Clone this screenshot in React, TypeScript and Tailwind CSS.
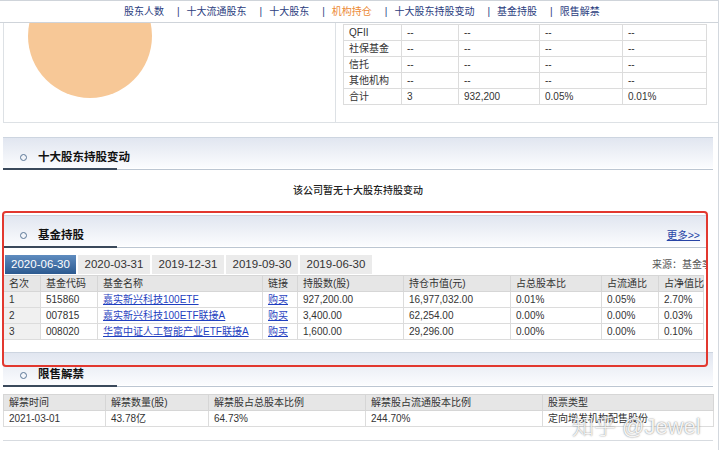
import React from 'react'

const navItems = ['股东人数', '十大流通股东', '十大股东', '机构持仓', '十大股东持股变动', '基金持股', '限售解禁']

const orgRows = [
  ['QFII', '--', '--', '--', '--'],
  ['社保基金', '--', '--', '--', '--'],
  ['信托', '--', '--', '--', '--'],
  ['其他机构', '--', '--', '--', '--'],
  ['合计', '3', '932,200', '0.05%', '0.01%'],
]
const orgCols = [58, 57, 81, 83, 84]

const tabs = ['2020-06-30', '2020-03-31', '2019-12-31', '2019-09-30', '2019-06-30']

const fundHead = ['名次', '基金代码', '基金名称', '链接', '持股数(股)', '持仓市值(元)', '占总股本比', '占流通比', '占净值比']
const fundCols = [37, 57, 165, 35, 106, 107, 91, 57, 45]
const fundRows = [
  ['1', '515860', '嘉实新兴科技100ETF', '购买', '927,200.00', '16,977,032.00', '0.01%', '0.05%', '2.70%'],
  ['2', '007815', '嘉实新兴科技100ETF联接A', '购买', '3,400.00', '62,254.00', '0.00%', '0.00%', '0.03%'],
  ['3', '008020', '华富中证人工智能产业ETF联接A', '购买', '1,600.00', '29,296.00', '0.00%', '0.00%', '0.10%'],
]

const lockHead = ['解禁时间', '解禁数量(股)', '解禁股占总股本比例', '解禁股占流通股本比例', '股票类型']
const lockCols = [102, 103, 157, 177, 171]
const lockRow = ['2021-03-01', '43.78亿', '64.73%', '244.70%', '定向增发机构配售股份']

// section title bar with ring icon + dark underline stub
function SectionTitle({ title, more, tall }: { title: string; more?: boolean; tall?: boolean }) {
  return (
    <div>
      <div
        className={
          (tall ? 'h-[33px] pt-[12px] ' : 'h-[31px] pt-[9px] ') +
          'border-t border-[#cdd5e0] bg-gradient-to-b from-[#e1e6f0] to-[#fbfcfe] flex items-center pl-[17px] pr-[7px]'
        }
      >
        <span className="w-[7px] h-[7px] rounded-full border-[1.5px] border-[#5a7696]" />
        <span className="ml-[11px] text-[11.5px] font-bold text-[#111]">{title}</span>
        {more && <span className="ml-auto text-[10.5px] text-[#2744a6] underline">更多&gt;&gt;</span>}
      </div>
      <div className="flex items-end h-[2px]">
        <div className="w-[114px] h-[2px] bg-[#3a495b]" />
        <div className="flex-1 h-px bg-[#bcc6d2]" />
      </div>
    </div>
  )
}

export default function App() {
  return (
    <div className="relative w-[720px] h-[450px] overflow-hidden bg-white text-[#333] font-['Liberation_Sans','Noto_Sans_CJK_SC',sans-serif]">
      <div className="w-[719px] h-full border-r border-[#d3d8de] flex flex-col">
        {/* NAV */}
        <div className="h-[23px] shrink-0 border-y border-[#cfd4da] flex items-center pl-[124px] text-[10px]">
          {navItems.map((n, i) => (
            <React.Fragment key={n}>
              {i > 0 && <span className="ml-[13px] mr-[7px] text-[#2b3d80]">|</span>}
              <span className={n === '机构持仓' ? 'text-[#ec8a35]' : 'text-[#2b3d80]'}>{n}</span>
            </React.Fragment>
          ))}
        </div>

        {/* 机构持仓 (scrolled) */}
        <div className="h-[100px] shrink-0 flex">
          <div className="ml-[3px] w-[333px] border-x border-b border-[#dde1e5] overflow-hidden">
            <svg width="331" height="99" viewBox="0 0 331 99">
              <circle cx="86" cy="13" r="62" fill="#f7c897" />
            </svg>
          </div>
          <div className="flex-1 border-b border-[#dde1e5]">
            <table className="ml-[7px] mt-px border-collapse table-fixed text-[10px]" style={{ width: 363 }}>
              <colgroup>
                {orgCols.map((w, i) => <col key={i} style={{ width: w }} />)}
              </colgroup>
              <tbody>
                {orgRows.map(r => (
                  <tr key={r[0]} className="h-[16px]">
                    {r.map((c, j) => (
                      <td key={j} className="border border-[#dcdcdc] px-[5px] leading-none whitespace-nowrap">{c}</td>
                    ))}
                  </tr>
                ))}
              </tbody>
            </table>
          </div>
        </div>

        {/* 十大股东持股变动 */}
        <div className="ml-[3px] w-[710px] mt-[14px]">
          <SectionTitle title="十大股东持股变动" />
          <div className="h-[40px] flex items-center justify-center text-[10px] font-medium text-[#222]">
            该公司暂无十大股东持股变动
          </div>
        </div>

        {/* 基金持股 */}
        <div className="ml-[3px] w-[704px] h-[137px] mt-[5px] overflow-hidden shrink-0">
          <SectionTitle title="基金持股" more />
          <div className="mt-[7px] h-[19px] flex items-center pl-[2px] gap-[2px]">
            {tabs.map((t, i) => (
              <div
                key={t}
                className={
                  i === 0
                    ? 'w-[71px] h-full flex items-center justify-center text-[11.5px] text-white bg-gradient-to-b from-[#5f8cbf] to-[#2c5a90]'
                    : 'w-[72px] h-full flex items-center justify-center text-[11.5px] text-[#333] bg-[#ebebeb]'
                }
              >
                {t}
              </div>
            ))}
            <span className="ml-auto mr-[-15px] shrink-0 whitespace-nowrap text-[10px] text-[#555]">来源：基金季报</span>
          </div>
          <table className="mt-px border-collapse table-fixed text-[10px]" style={{ width: 700 }}>
            <colgroup>
              {fundCols.map((w, i) => <col key={i} style={{ width: w }} />)}
            </colgroup>
            <thead>
              <tr className="h-[16px] bg-[#e6e6e6]">
                {fundHead.map(h => (
                  <th key={h} className="border border-[#d6d6d6] px-[5px] font-normal text-left leading-none whitespace-nowrap">{h}</th>
                ))}
              </tr>
            </thead>
            <tbody>
              {fundRows.map(r => (
                <tr key={r[0]} className="h-[16px]">
                  {r.map((c, j) => (
                    <td
                      key={j}
                      className={
                        'border border-[#dcdcdc] px-[5px] leading-none whitespace-nowrap ' +
                        (j === 0 ? 'bg-[#f0f0f0]' : '') +
                        (j === 2 || j === 3 ? 'text-[#1f3fc0] underline' : '')
                      }
                    >
                      {c}
                    </td>
                  ))}
                </tr>
              ))}
            </tbody>
          </table>
        </div>

        {/* 限售解禁 */}
        <div className="ml-[3px] w-[710px] pb-[13px] border-b border-[#d7dbe0]">
          <SectionTitle title="限售解禁" tall />
          <table className="mt-[7px] border-collapse table-fixed text-[10px]" style={{ width: 710 }}>
            <colgroup>
              {lockCols.map((w, i) => <col key={i} style={{ width: w }} />)}
            </colgroup>
            <thead>
              <tr className="h-[16px] bg-[#e6e6e6]">
                {lockHead.map(h => (
                  <th key={h} className="border border-[#d6d6d6] px-[5px] font-normal text-left leading-none whitespace-nowrap">{h}</th>
                ))}
              </tr>
            </thead>
            <tbody>
              <tr className="h-[16px]">
                {lockRow.map((c, j) => (
                  <td key={j} className="border border-[#dcdcdc] px-[5px] leading-none whitespace-nowrap">{c}</td>
                ))}
              </tr>
            </tbody>
          </table>
        </div>
      </div>

      {/* red annotation frame */}
      <div className="absolute left-[2px] top-[211px] w-[706px] h-[156px] border-2 border-[#e2382f] rounded-[4px] pointer-events-none" />

      {/* watermark */}
      <div className="absolute left-[572px] top-[410px] text-[22px] font-light text-white/90 [text-shadow:0_0_1.5px_rgba(60,60,60,0.8)] whitespace-nowrap">
        知乎 @Jewel
      </div>
    </div>
  )
}
